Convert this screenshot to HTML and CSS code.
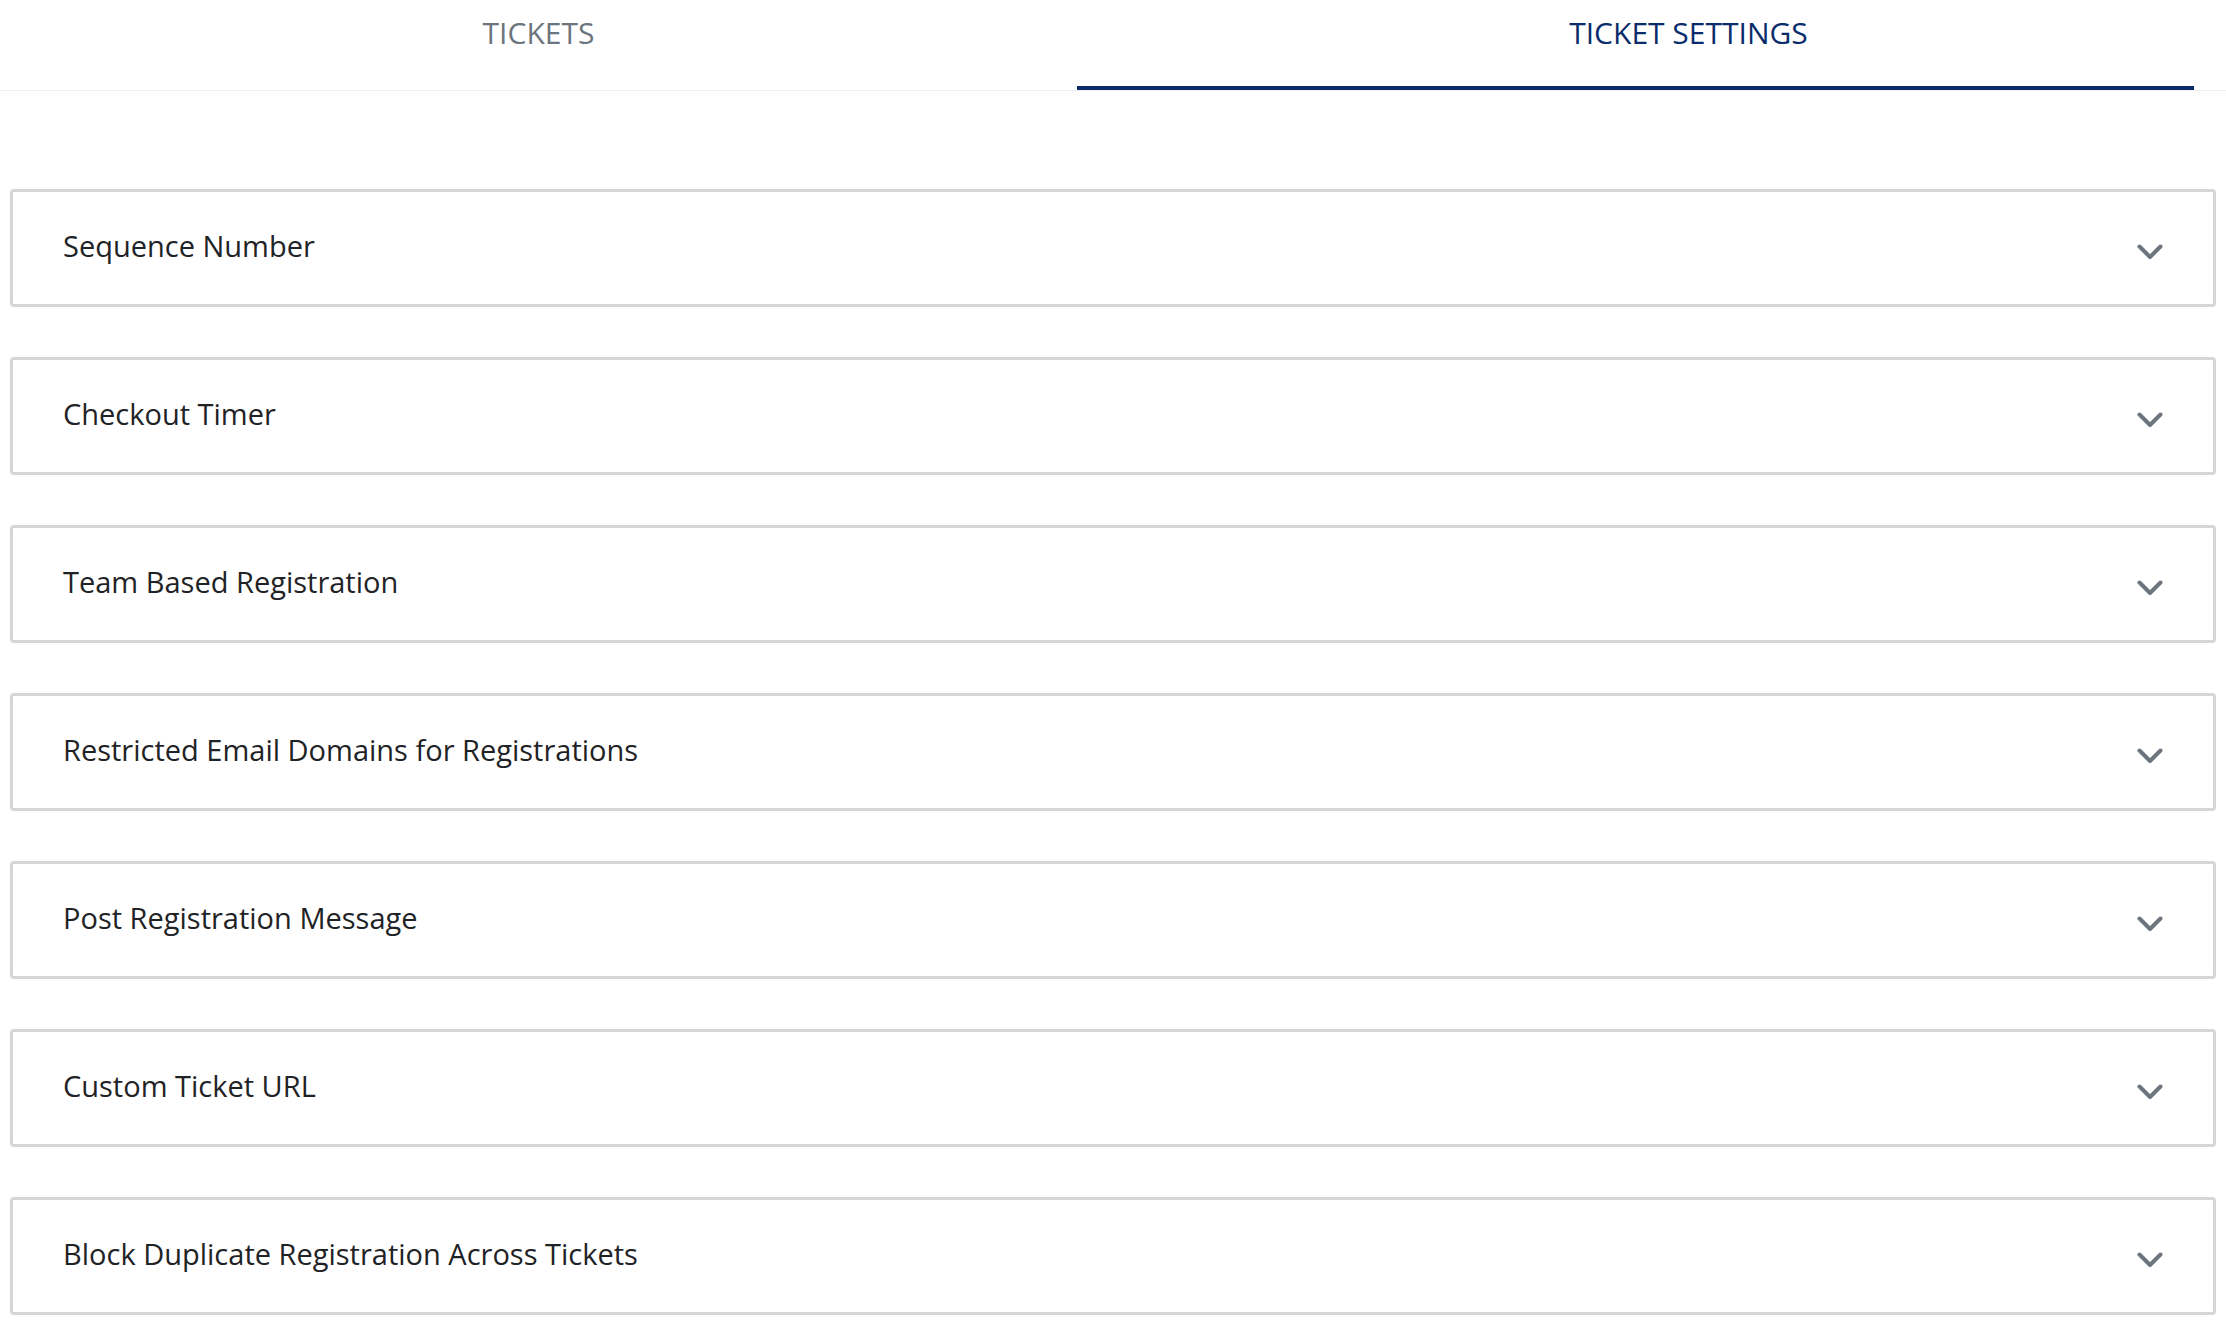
FILE: index.html
```html
<!DOCTYPE html>
<html lang="en">
<head>
    <meta charset="UTF-8">
    <title>Ticket Settings</title>
    <link rel="stylesheet" href="styles.css">
</head>
<body>
    <nav class="tabs">
        <div class="tab">TICKETS</div>
        <div class="tab active">TICKET SETTINGS</div>
    </nav>

    <div class="settings">
        <div class="panel">
            <span class="panel-title">Sequence Number</span>
            <svg class="chevron" viewBox="0 0 26 16"><polyline points="2.5,2.5 13,13 23.5,2.5"/></svg>
        </div>
        <div class="panel">
            <span class="panel-title">Checkout Timer</span>
            <svg class="chevron" viewBox="0 0 26 16"><polyline points="2.5,2.5 13,13 23.5,2.5"/></svg>
        </div>
        <div class="panel">
            <span class="panel-title">Team Based Registration</span>
            <svg class="chevron" viewBox="0 0 26 16"><polyline points="2.5,2.5 13,13 23.5,2.5"/></svg>
        </div>
        <div class="panel">
            <span class="panel-title">Restricted Email Domains for Registrations</span>
            <svg class="chevron" viewBox="0 0 26 16"><polyline points="2.5,2.5 13,13 23.5,2.5"/></svg>
        </div>
        <div class="panel">
            <span class="panel-title">Post Registration Message</span>
            <svg class="chevron" viewBox="0 0 26 16"><polyline points="2.5,2.5 13,13 23.5,2.5"/></svg>
        </div>
        <div class="panel">
            <span class="panel-title">Custom Ticket URL</span>
            <svg class="chevron" viewBox="0 0 26 16"><polyline points="2.5,2.5 13,13 23.5,2.5"/></svg>
        </div>
        <div class="panel">
            <span class="panel-title">Block Duplicate Registration Across Tickets</span>
            <svg class="chevron" viewBox="0 0 26 16"><polyline points="2.5,2.5 13,13 23.5,2.5"/></svg>
        </div>
    </div>
</body>
</html>
```

FILE: styles.css
```css
:root {
    --navy: #0a2c6b;
    --muted: #6c757d;
    --text: #1f2326;
    --panel-border: #d6d6d6;
}

* {
    margin: 0;
    padding: 0;
    box-sizing: border-box;
}

body {
    background: #fff;
    font-family: 'Open Sans', 'Noto Sans', sans-serif;
    color: var(--text);
    overflow: hidden;
}

.tabs {
    display: flex;
    border-bottom: 1px solid #f0f0f0;
}

.tab {
    height: 90px;
    padding-top: 12px;
    display: flex;
    justify-content: center;
    align-items: flex-start;
    font-size: 30px;
    color: var(--muted);
    width: 1077px;
}

.tab.active {
    width: 1117px;
    padding-left: 106px;
    color: var(--navy);
    border-bottom: 4px solid var(--navy);
}

.settings {
    display: flex;
    flex-direction: column;
    gap: 50px;
    padding: 98px 10px 0;
}

.panel {
    height: 118px;
    border: 3px solid var(--panel-border);
    border-radius: 4px;
    display: flex;
    align-items: center;
    justify-content: space-between;
    padding: 0 50px 0 50px;
}

.panel-title {
    font-size: 29px;
    margin-bottom: 6px;
}

.chevron {
    width: 26px;
    height: 16px;
    margin-top: 7px;
    fill: none;
    stroke: var(--muted);
    stroke-width: 4;
    stroke-linecap: round;
    stroke-linejoin: round;
}
```
